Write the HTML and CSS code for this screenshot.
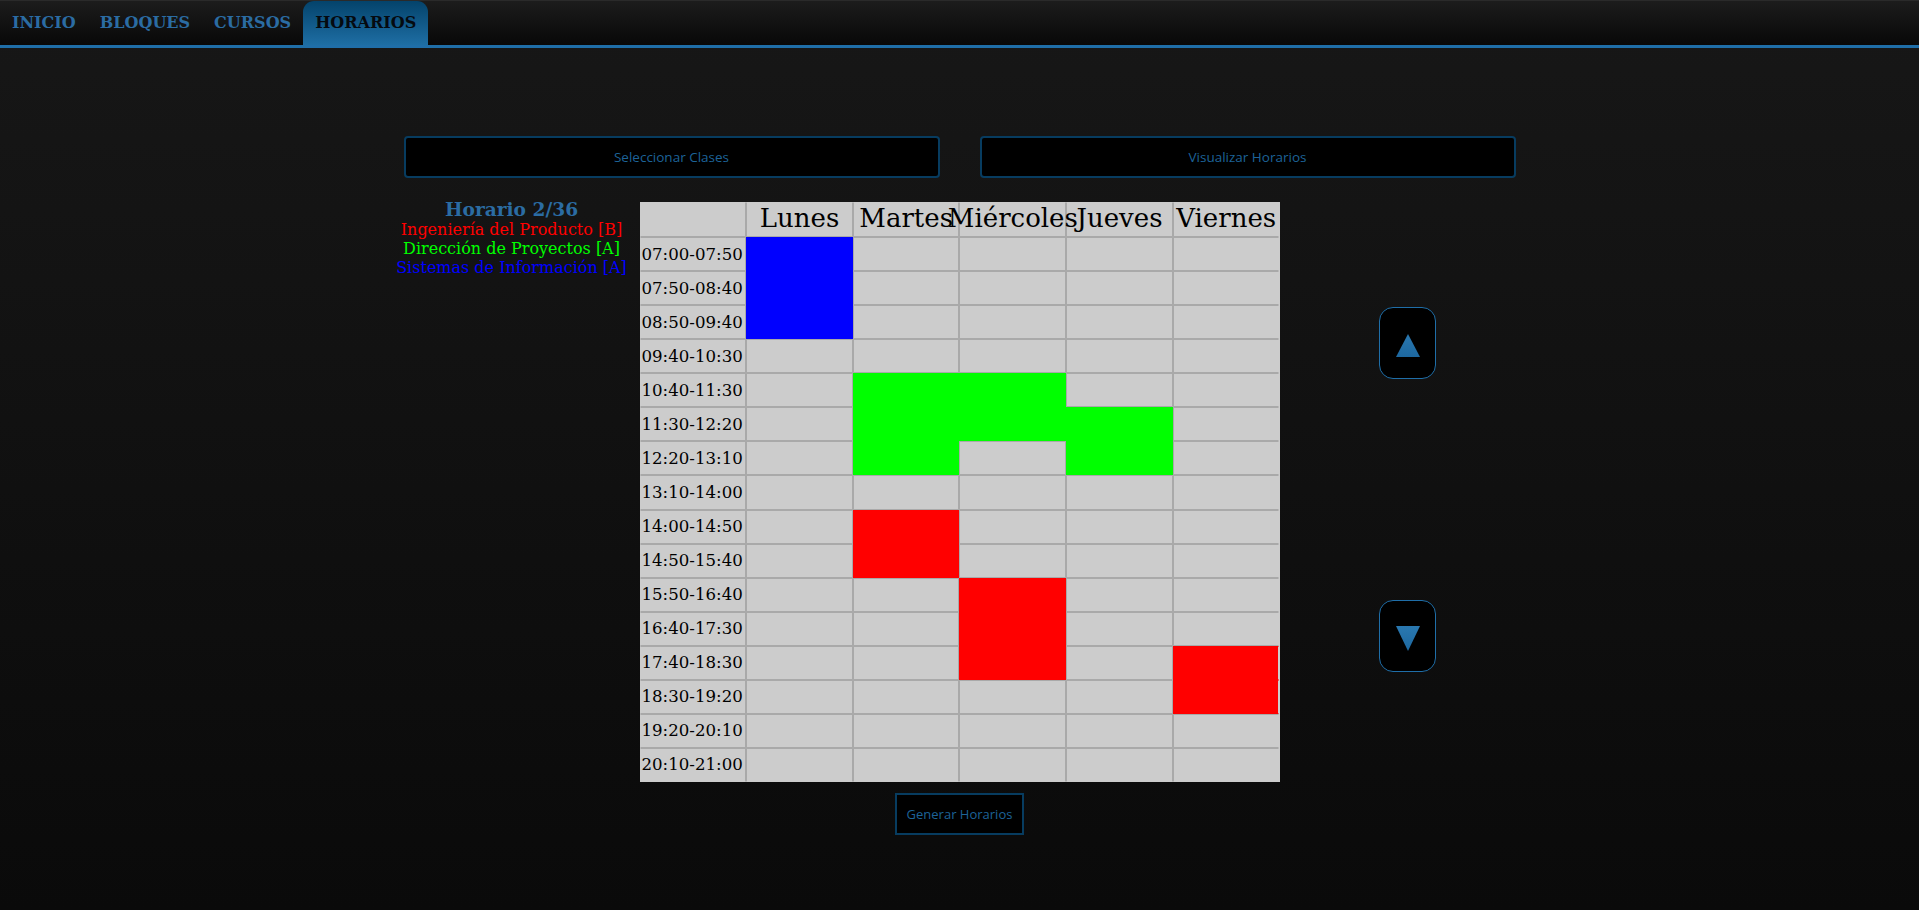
FILE: index.html
```html
<!DOCTYPE html>
<html lang="es">
<head>
<meta charset="utf-8">
<title>Horarios</title>
<link rel="stylesheet" href="styles.css">
</head>
<body>
<nav class="nav">
  <a class="nav-item">INICIO</a>
  <a class="nav-item">BLOQUES</a>
  <a class="nav-item">CURSOS</a>
  <a class="nav-item active">HORARIOS</a>
</nav>
<main class="main">
  <div class="tabs">
    <div class="tab-cell"><button class="tab-btn">Seleccionar Clases</button></div>
    <div class="tab-cell"><button class="tab-btn">Visualizar Horarios</button></div>
  </div>
  <div class="content">
    <div class="legend">
      <div class="legend-title">Horario 2/36</div>
      <div class="legend-item red">Ingeniería del Producto [B]</div>
      <div class="legend-item green">Dirección de Proyectos [A]</div>
      <div class="legend-item blue">Sistemas de Información [A]</div>
    </div>
    <div class="grid">
      <div class="c head"></div><div class="c head"><span>Lunes</span></div><div class="c head"><span>Martes</span></div><div class="c head"><span>Miércoles</span></div><div class="c head"><span>Jueves</span></div><div class="c head"><span>Viernes</span></div>

      <div class="c time">07:00-07:50</div><div class="c b-blue"></div><div class="c"></div><div class="c"></div><div class="c"></div><div class="c"></div>
      <div class="c time">07:50-08:40</div><div class="c b-blue"></div><div class="c"></div><div class="c"></div><div class="c"></div><div class="c"></div>
      <div class="c time">08:50-09:40</div><div class="c b-blue"></div><div class="c"></div><div class="c"></div><div class="c"></div><div class="c"></div>
      <div class="c time">09:40-10:30</div><div class="c"></div><div class="c"></div><div class="c"></div><div class="c"></div><div class="c"></div>
      <div class="c time">10:40-11:30</div><div class="c"></div><div class="c b-green"></div><div class="c b-green"></div><div class="c"></div><div class="c"></div>
      <div class="c time">11:30-12:20</div><div class="c"></div><div class="c b-green"></div><div class="c b-green"></div><div class="c b-green"></div><div class="c"></div>
      <div class="c time">12:20-13:10</div><div class="c"></div><div class="c b-green"></div><div class="c"></div><div class="c b-green"></div><div class="c"></div>
      <div class="c time">13:10-14:00</div><div class="c"></div><div class="c"></div><div class="c"></div><div class="c"></div><div class="c"></div>
      <div class="c time">14:00-14:50</div><div class="c"></div><div class="c b-red"></div><div class="c"></div><div class="c"></div><div class="c"></div>
      <div class="c time">14:50-15:40</div><div class="c"></div><div class="c b-red"></div><div class="c"></div><div class="c"></div><div class="c"></div>
      <div class="c time">15:50-16:40</div><div class="c"></div><div class="c"></div><div class="c b-red"></div><div class="c"></div><div class="c"></div>
      <div class="c time">16:40-17:30</div><div class="c"></div><div class="c"></div><div class="c b-red"></div><div class="c"></div><div class="c"></div>
      <div class="c time">17:40-18:30</div><div class="c"></div><div class="c"></div><div class="c b-red"></div><div class="c"></div><div class="c b-red"></div>
      <div class="c time">18:30-19:20</div><div class="c"></div><div class="c"></div><div class="c"></div><div class="c"></div><div class="c b-red"></div>
      <div class="c time">19:20-20:10</div><div class="c"></div><div class="c"></div><div class="c"></div><div class="c"></div><div class="c"></div>
      <div class="c time">20:10-21:00</div><div class="c"></div><div class="c"></div><div class="c"></div><div class="c"></div><div class="c"></div>
    </div>
    <div class="arrows">
      <button class="arrow-btn"><svg width="24" height="23" viewBox="0 0 24 23"><defs><linearGradient id="ga" x1="0" y1="0" x2="0" y2="1"><stop offset="0" stop-color="#2a78b0"/><stop offset="1" stop-color="#1d68a0"/></linearGradient></defs><polygon points="12,0 24,23 0,23" fill="url(#ga)"/></svg></button>
      <button class="arrow-btn down"><svg width="24" height="25" viewBox="0 0 24 25"><defs><linearGradient id="gb" x1="0" y1="0" x2="0" y2="1"><stop offset="0" stop-color="#2a78b0"/><stop offset="1" stop-color="#1d68a0"/></linearGradient></defs><polygon points="0,0 24,0 12,25" fill="url(#gb)"/></svg></button>
    </div>
  </div>
  <div class="gen-row"><button class="gen-btn">Generar Horarios</button></div>
</main>
</body>
</html>
```

FILE: styles.css
```css
html, body {
  margin: 0;
  padding: 0;
}
body {
  min-height: 910px;
  background: linear-gradient(to bottom, #171717 0%, #0a0a0a 100%);
  font-family: "DejaVu Serif", serif;
}
.nav {
  display: flex;
  background: linear-gradient(to bottom, #1c1c1c 0%, #080808 100%);
  border-top: 1px solid #2a2a2a;
  border-bottom: 3px solid #1f6ea8;
  height: 44px;
}
.nav-item {
  display: block;
  padding: 0 12px;
  font-family: "DejaVu Serif", serif;
  font-weight: bold;
  font-size: 16px;
  line-height: 44px;
  color: #2b6ca3;
  cursor: pointer;
}
.nav-item.active {
  color: #050a10;
  border-radius: 11px 11px 0 0;
  background: linear-gradient(to bottom, #04436b 0%, #1e6ea4 100%);
}
.main {
  width: 1152px;
  margin: 88px auto 0;
}
.tabs {
  display: flex;
}
.tab-cell {
  flex: 1 1 0;
  padding: 0 20px;
}
.tab-btn {
  display: block;
  width: 100%;
  height: 42px;
  background: #000;
  border: 2px solid #073c60;
  border-radius: 4px;
  color: #1d6398;
  font-family: "Open Sans", sans-serif;
  font-size: 13.5px;
  cursor: pointer;
}
.content {
  display: flex;
  margin-top: 24px;
  align-items: stretch;
}
.legend {
  width: 256px;
  text-align: center;
  margin-top: -3px;
  font-size: 16px;
}
.legend-title {
  font-weight: bold;
  font-size: 18.6px;
  color: #2b6ca3;
}
.red { color: #ff0000; }
.green { color: #00ff00; }
.blue { color: #0000ff; }
.grid {
  width: 640px;
  height: 580px;
  display: grid;
  grid-template-columns: repeat(6, 1fr);
  grid-template-rows: repeat(17, 1fr);
  background: #cccccc;
}
.c {
  box-sizing: border-box;
  border: 1px solid #a9a9a9;
  background: #cccccc;
  min-width: 0;
  display: flex;
  align-items: center;
}
.grid .c:nth-child(-n+6) { border-top-color: #cccccc; }
.grid .c:nth-child(6n+1) { border-left-color: #cccccc; }
.grid .c:nth-child(6n) { border-right-color: #cccccc; }
.grid .c:nth-last-child(-n+6) { border-bottom-color: #cccccc; }
.head {
  justify-content: center;
  font-size: 26px;
  color: #000;
  white-space: nowrap;
  overflow: visible;
  padding-bottom: 3px;
}
.head span {
  flex: 0 0 auto;
  position: relative;
  z-index: 1;
}
.time {
  font-size: 16.6px;
  color: #000;
  white-space: nowrap;
  padding-left: 1px;
}
.grid .b-blue { background: #0000ff; border-color: #0000ff; }
.grid .b-green { background: #00ff00; border-color: #00ff00; }
.grid .b-red { background: #ff0000; border-color: #ff0000; }
.arrows {
  width: 256px;
  box-sizing: border-box;
  padding: 105px 0 110px;
  display: flex;
  flex-direction: column;
  align-items: center;
  justify-content: space-between;
}
.arrow-btn {
  width: 57px;
  height: 72px;
  background: #000;
  border: 1px solid #1f6ea8;
  border-radius: 14px;
  display: flex;
  align-items: center;
  justify-content: center;
  padding: 4px 0 0;
  cursor: pointer;
}
.arrow-btn svg { display: block; }
.gen-row {
  display: flex;
  justify-content: center;
  margin-top: 11px;
}
.gen-btn {
  width: 129px;
  height: 42px;
  background: #000;
  border: 2px solid #073c60;
  border-radius: 0;
  color: #1d6398;
  font-family: "Open Sans", sans-serif;
  font-size: 13px;
  cursor: pointer;
}
```
